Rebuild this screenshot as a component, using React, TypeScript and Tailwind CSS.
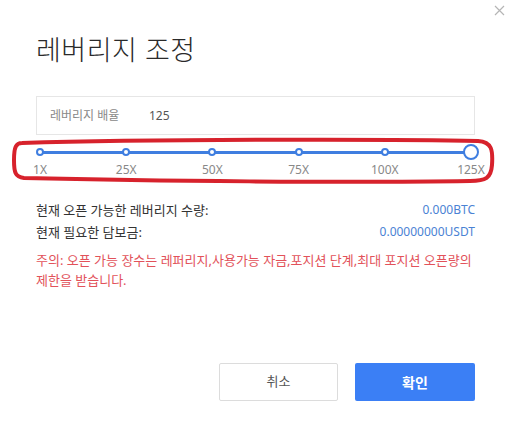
const marks = ["1X", "25X", "50X", "75X", "100X", "125X"];

const CloseIcon = () => (
  <svg width="11" height="11" viewBox="0 0 11 11" className="block">
    <path d="M1 1L10 10M10 1L1 10" stroke="#b5b5b5" strokeWidth="1.2" />
  </svg>
);

const LeverageSlider = () => {
  return (
    <div className="mt-[9px]">
      <div className="relative -mx-[4px] h-[16px]">
        <div className="absolute left-[8px] right-[8px] top-[6.5px] h-[3px] bg-[#3f7ee0]" />
        <div className="relative flex justify-between h-full">
          {marks.map((m, i) => (
            <div key={m} className="w-[16px] h-[16px] flex items-center justify-center">
              {i === marks.length - 1 ? (
                <span className="w-[16px] h-[16px] rounded-full border-2 border-[#3f7ee0] bg-white" />
              ) : (
                <span className="w-[8px] h-[8px] rounded-full border-2 border-[#3f7ee0] bg-white" />
              )}
            </div>
          ))}
        </div>
      </div>
      <div className="-mx-[11px] mt-[2px] flex justify-between">
        {marks.map((m) => (
          <span key={m} className="w-[30px] text-center text-[12px] leading-[16px] text-[#888]">
            {m}
          </span>
        ))}
      </div>
    </div>
  );
};

const App = () => {
  return (
    <div className="relative w-[515px] h-[426px] bg-white overflow-hidden font-['Noto_Sans','Noto_Sans_CJK_KR',sans-serif]">
      <button className="absolute top-[5px] right-[10px] p-0">
        <CloseIcon />
      </button>

      <div className="pl-[36px] pr-[40px]">
        <h2 className="mt-[34px] text-[27px] leading-[32px] font-light text-[#2a2a2a] tracking-[0.5px]">
          레버리지 조정
        </h2>

        <div className="mt-[30px] h-[39px] border border-[#e6e6e6] flex items-center pl-[13px] text-[12px]">
          <span className="w-[99px] text-[#888]">레버리지 배율</span>
          <span className="text-[#555]">125</span>
        </div>

        <LeverageSlider />

        <div className="mt-[21px] text-[13px] leading-[22px] text-[#333]">
          <div className="flex justify-between">
            <span>현재 오픈 가능한 레버리지 수량:</span>
            <span className="text-[12px] text-[#4a82d4]">0.000BTC</span>
          </div>
          <div className="flex justify-between">
            <span>현재 필요한 담보금:</span>
            <span className="text-[12px] text-[#4a82d4]">0.00000000USDT</span>
          </div>
        </div>

        <p className="mt-[7px] text-[13px] leading-[20px] text-[#e2525a]">
          주의: 오픈 가능 장수는 레퍼리지,사용가능 자금,포지션 단계,최대 포지션 오픈량의
          <br />
          제한을 받습니다.
        </p>

        <div className="mt-[73px] flex justify-end gap-[17px]">
          <button className="w-[119px] h-[38px] border border-[#dcdcdc] rounded-[2px] bg-white text-[13px] text-[#555]">
            취소
          </button>
          <button className="w-[120px] h-[38px] rounded-[2px] bg-[#3b7ff5] text-[14px] font-bold text-white">
            확인
          </button>
        </div>
      </div>

      <svg className="absolute inset-0 pointer-events-none" width="515" height="426">
        <path
          d="M22 143 C150 139 400 139 478 141 C492 142 493 150 492 165 C491 178 486 181 470 181 C350 183 150 181 24 178 C15 177 14 172 14 160 C14 147 16 143 22 143 Z"
          fill="none"
          stroke="#d7222c"
          strokeWidth="4"
        />
      </svg>
    </div>
  );
};

export default App;
